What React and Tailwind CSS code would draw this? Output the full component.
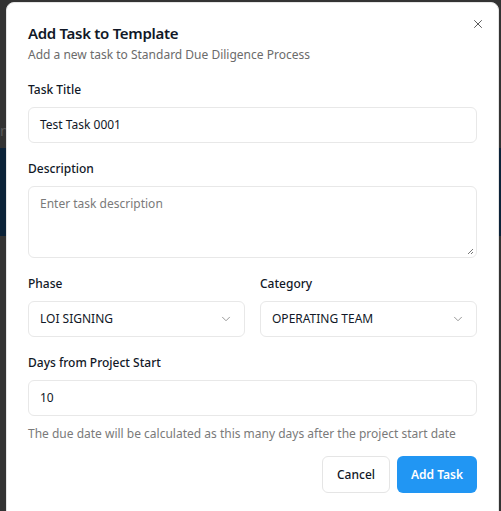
import React from "react";
import { X, ChevronDown } from "lucide-react";

const Label = ({ children }) => (
  <label className="block text-[12px] font-medium text-[#111827] mb-[8px] leading-[18px]">{children}</label>
);

const SelectBox = ({ value }) => (
  <div className="flex items-center justify-between h-[36px] rounded-md border border-[#e8e8e8] bg-white pl-[11px] pr-[11px] text-[12px] text-[#111827]">
    <span>{value}</span>
    <ChevronDown size={14} strokeWidth={1.5} className="text-[#8a8a8a]" />
  </div>
);

export default function App() {
  return (
    <div
      className="relative h-[511px] w-[501px] overflow-hidden bg-[#333333]"
      style={{ fontFamily: '"Noto Sans", "Open Sans", sans-serif' }}
    >
      {/* page behind the overlay */}
      <div className="flex flex-col pt-[120px]">
        <div className="h-[28px] text-[14px] text-[#5a5a5a]">n</div>
        <div className="h-[88px] bg-[#0b2238]" />
      </div>

      {/* dialog */}
      <div className="absolute left-[6px] top-[2px] w-[493px] h-[530px] rounded-lg bg-white border border-[#e5e5e5] px-[21px] pt-[19px]">
        <button className="absolute right-[13px] top-[14px] text-[#444]">
          <X size={14} strokeWidth={1.5} />
        </button>
        <h2 className="text-[15px] font-semibold tracking-[-0.3px] text-[#111827] leading-[22px]">Add Task to Template</h2>
        <p className="text-[12px] text-[#6b6b6b] mt-[2px] leading-[18px]">
          Add a new task to Standard Due Diligence Process
        </p>

        <div className="mt-[17px] flex flex-col gap-[17px]">
          <div>
            <Label>Task Title</Label>
            <div className="flex items-center h-[36px] rounded-md border border-[#e8e8e8] px-[11px] text-[12px] text-[#111827]">
              Test Task 0001
            </div>
          </div>

          <div>
            <Label>Description</Label>
            <div className="relative h-[72px] rounded-md border border-[#e8e8e8] px-[11px] pt-[8px] text-[12px] text-[#7a7a7a]">
              Enter task description
              <svg className="absolute right-[2px] bottom-[2px]" width="7" height="7" viewBox="0 0 7 7">
                <path d="M6 1 L1 6 M6 4 L4 6" stroke="#777" strokeWidth="1" />
              </svg>
            </div>
          </div>

          <div className="grid grid-cols-2 gap-[15px]">
            <div>
              <Label>Phase</Label>
              <SelectBox value="LOI SIGNING" />
            </div>
            <div>
              <Label>Category</Label>
              <SelectBox value="OPERATING TEAM" />
            </div>
          </div>

          <div>
            <Label>Days from Project Start</Label>
            <div className="flex items-center h-[36px] rounded-md border border-[#e8e8e8] px-[11px] text-[12px] text-[#111827]">
              10
            </div>
            <p className="mt-[9px] text-[12px] text-[#7a7a7a] leading-[18px]">
              The due date will be calculated as this many days after the project start date
            </p>
          </div>
        </div>

        <div className="mt-[13px] flex justify-end gap-[7px]">
          <button className="h-[37px] w-[68px] rounded-md border border-[#e5e5e5] bg-white text-[12px] font-medium text-[#111827]">
            Cancel
          </button>
          <button className="h-[37px] w-[80px] rounded-md bg-[#2196f3] text-[12px] font-semibold text-white">
            Add Task
          </button>
        </div>
      </div>
    </div>
  );
}
